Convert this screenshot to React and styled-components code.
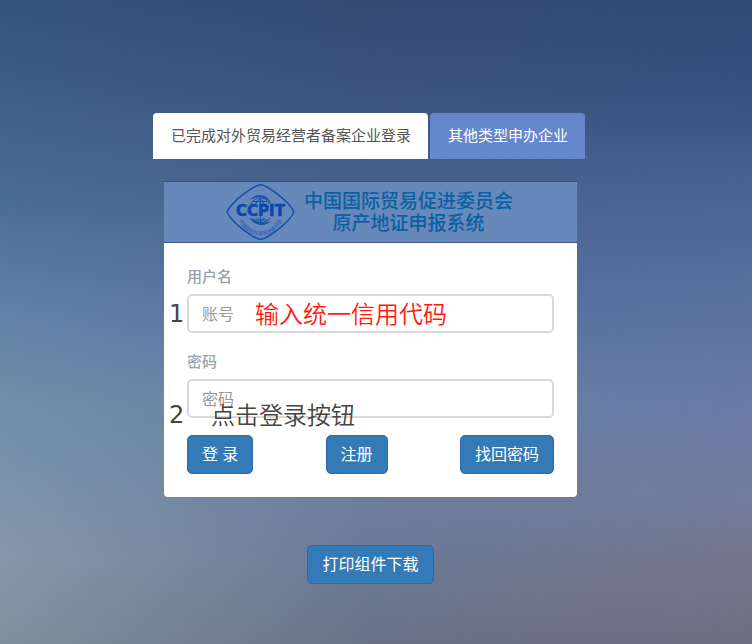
import React from "react";
import styled, { createGlobalStyle, css } from "styled-components";

const GlobalStyle = createGlobalStyle`
  *, *::before, *::after { box-sizing: border-box; }
  body {
    margin: 0;
    font-family: "Open Sans", "Noto Sans CJK SC", sans-serif;
    font-size: 16px;
    color: #444;
  }
  button, input { font: inherit; }
`;

const Page = styled.div`
  position: relative;
  isolation: isolate;
  display: flex;
  flex-direction: column;
  align-items: center;
  min-height: 100vh;
  padding: 113px 11px 60px 0;
  background: linear-gradient(#304a75, #384f80 13%, #4b6595 31%, #5b719f 47%, #697ba6 62%, #727c9c 77%, #757589 90%, #706f80);

  &::before,
  &::after {
    content: "";
    position: absolute;
    inset: 0;
    z-index: -1;
  }
  &::before {
    background: linear-gradient(#344970, #3e557f 16%, #455f8a 26%, #566fa0 47%, #6480a5 62%, #6c7d9b 79%, #697289);
    mask-image: linear-gradient(to right, #000 50%, transparent);
  }
  &::after {
    background: linear-gradient(#34547c, #3f5f88 16%, #4a6c94 31%, #6080a6 47%, #708ea8 62%, #7e94aa 78%, #8697ab 87%, #80909a);
    mask-image: linear-gradient(to right, #000, transparent 50%);
  }
`;

const Tabs = styled.div`
  display: flex;
  gap: 2px;
  margin-right: 3px;
  margin-bottom: 22px;
`;

const Tab = styled.button`
  height: 46px;
  padding: 0 17px 3px 18px;
  border: 0;
  border-radius: 4px 4px 0 0;
  font-size: 15px;
  line-height: 22px;
  cursor: pointer;
  ${({ $active }) =>
    $active
      ? css`background: #fff; color: #555;`
      : css`background: #6787cc; color: #fff;`}
`;

const Card = styled.main`
  width: 100%;
  max-width: 413px;
  border-radius: 0 0 4px 4px;
  overflow: hidden;
  background: #fff;
`;

const Banner = styled.header`
  display: flex;
  align-items: center;
  justify-content: center;
  gap: 8px;
  height: 62px;
  padding-right: 3px;
  border-top: 1px solid #3d5075;
  border-bottom: 1px solid #3d5583;
  background: #6788bb;
`;

const Logo = styled.svg`
  flex: none;
  width: 71px;
  height: 58px;
`;

const BannerTitle = styled.h1`
  margin: 0;
  font-size: 19px;
  line-height: 22px;
  font-weight: 500;
  text-align: center;
  color: #0b609f;
`;

const Form = styled.form`
  padding: 22px 23px 23px;
`;

const Field = styled.div`
  margin-bottom: 17px;
`;

const Label = styled.label`
  display: block;
  margin-bottom: 7px;
  font-size: 15px;
  line-height: 22px;
  font-weight: 500;
  color: #99a1ad;
`;

const InputWrap = styled.div`
  position: relative;
`;

const Input = styled.input`
  display: block;
  width: 100%;
  height: 39px;
  padding: 0 13px;
  border: 2px solid #dadada;
  border-radius: 5px;
  background: #fff;
  color: #555;
  &::placeholder { color: #999; opacity: 1; }
`;

const Note = styled.span`
  position: absolute;
  top: ${({ $top }) => $top}px;
  left: ${({ $left }) => $left}px;
  font-size: 24px;
  line-height: 32px;
  font-weight: 350;
  white-space: nowrap;
  pointer-events: none;
  color: ${({ $color }) => $color || "#444"};
`;

const StepNumber = styled(Note)`
  font-family: "DejaVu Sans", sans-serif;
  font-weight: 400;
`;

const Actions = styled.div`
  display: flex;
  justify-content: space-between;
`;

const Button = styled.button`
  height: 39px;
  padding: 0 14px 2px;
  border: 1px solid #2a6ba6;
  border-radius: 5px;
  background: #337ab7;
  color: #fff;
  font-size: 16px;
  line-height: 22px;
  cursor: pointer;
`;

const Download = styled(Button)`
  margin-top: 48px;
`;

function CcpitLogo() {
  return (
    <Logo viewBox="0 0 71 58" role="img" aria-label="CCPIT">
      <defs>
        <path id="ring" d="M13 36 Q21 52 35.500 52 Q50 52 58 36" />
      </defs>
      <g fill="none" stroke="#1550a8">
        <path strokeWidth="1.500" d="M35.500 1.500 C43 3 64 18 69 29 C64 40 43 55 35.500 56.500 C28 55 7 40 2 29 C7 18 28 3 35.500 1.500Z" />
        <path strokeWidth="1" d="M26 21 C29 13 41 13 44 21 M31 21 C32 15 38 15 39 21 M35.500 15 V22 M28 18.500 H42" />
        <path strokeWidth="1" d="M27 35 C30 41 41 41 45 35 M32 35 C33 39 38 39 39 35 M35.500 34 V39 M29 37 H42" />
      </g>
      <path fill="#1550a8" d="M25 17 C30 10 43 10 47 22 C42 14 33 12 25 17Z M24 34 C28 42 39 45 46 38 C38 41 30 40 24 34Z" />
      <text x="35.500" y="33" textAnchor="middle" fontFamily="DejaVu Sans, sans-serif" fontWeight="700" fontSize="15" fill="#0d49aa" stroke="#0d49aa" strokeWidth="0.600">CCPIT</text>
      <text fontFamily="Noto Sans CJK SC, sans-serif" fontSize="5" fill="#2456ab">
        <textPath href="#ring" startOffset="50%" textAnchor="middle">中国国际贸易促进委员会</textPath>
      </text>
    </Logo>
  );
}

export default function App() {
  return (
    <>
      <GlobalStyle />
      <Page>
        <Tabs role="tablist">
          <Tab type="button" role="tab" aria-selected="true" $active>已完成对外贸易经营者备案企业登录</Tab>
          <Tab type="button" role="tab" aria-selected="false">其他类型申办企业</Tab>
        </Tabs>
        <Card>
          <Banner>
            <CcpitLogo />
            <BannerTitle>中国国际贸易促进委员会<br />原产地证申报系统</BannerTitle>
          </Banner>
          <Form onSubmit={(e) => e.preventDefault()}>
            <Field>
              <Label htmlFor="account">用户名</Label>
              <InputWrap>
                <Input id="account" type="text" placeholder="账号" />
                <StepNumber $top={4} $left={-18}>1</StepNumber>
                <Note $top={4} $left={68} $color="#ff1a12">输入统一信用代码</Note>
              </InputWrap>
            </Field>
            <Field>
              <Label htmlFor="password">密码</Label>
              <InputWrap>
                <Input id="password" type="password" placeholder="密码" />
                <StepNumber $top={20} $left={-18}>2</StepNumber>
                <Note $top={20} $left={24}>点击登录按钮</Note>
              </InputWrap>
            </Field>
            <Actions>
              <Button type="submit">登 录</Button>
              <Button type="button">注册</Button>
              <Button type="button">找回密码</Button>
            </Actions>
          </Form>
        </Card>
        <Download type="button">打印组件下载</Download>
      </Page>
    </>
  );
}
